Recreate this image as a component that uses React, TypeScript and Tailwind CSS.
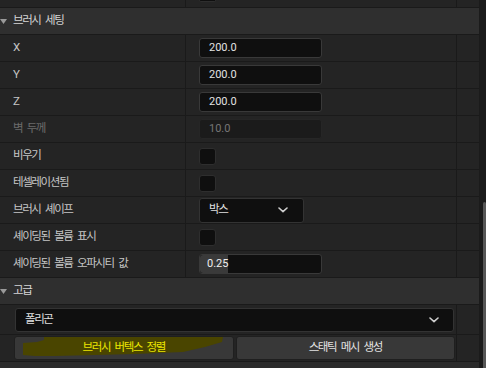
import React from "react";

const font = "font-['Roboto','Noto_Sans_CJK_KR',sans-serif]";
const ko = "text-[11.5px] tracking-[-1.4px] [word-spacing:3px]";

const Chevron = () => (
  <svg width="10" height="6" viewBox="0 0 10 6" fill="none">
    <path d="M1 1l4 3.6L9 1" stroke="#cfcfcf" strokeWidth="1.6" strokeLinecap="round" strokeLinejoin="round" />
  </svg>
);

const Row: React.FC<{ label: string; disabled?: boolean; children?: React.ReactNode }> = ({ label, disabled, children }) => (
  <div className="flex h-[27px] border-b border-[#1a1a1a] bg-[#242424]">
    <div className={`w-[185px] flex items-center pl-[13px] ${ko} ${disabled ? "text-[#6b6b6b]" : "text-[#c6c6c6]"}`}>
      {label}
    </div>
    <div className="w-px bg-[#1a1a1a]" />
    <div className="w-[270px] flex items-center pl-[13px]">{children}</div>
    <div className="w-px bg-[#1a1a1a]" />
    <div className="flex-1" />
  </div>
);

const Header: React.FC<{ label: string }> = ({ label }) => (
  <div className="flex items-center h-[27px] border-b border-[#1a1a1a] bg-[#2f2f2f]">
    <svg width="7" height="5" viewBox="0 0 7 5" className="mr-[6px]">
      <path d="M0 0h7L3.5 5z" fill="#9a9a9a" />
    </svg>
    <span className={`${ko} text-[#d6d6d6]`}>{label}</span>
  </div>
);

const NumInput: React.FC<{ value: string; disabled?: boolean }> = ({ value, disabled }) => (
  <div
    className={`w-[123px] h-[20px] rounded-[3px] border flex items-center pl-[9px] text-[11px] ${
      disabled ? "bg-[#1b1b1b] border-[#262626] text-[#767676]" : "bg-[#0f0f0f] border-[#393939] text-[#e2e2e2]"
    }`}
  >
    {value}
  </div>
);

const Check = () => <div className="w-[17px] h-[17px] rounded-[3px] bg-[#0f0f0f] border border-[#2e2e2e]" />;

export default function App() {
  return (
    <div className={`w-[486px] h-[368px] overflow-hidden flex bg-[#242424] ${font}`}>
      <div className="w-[479px] flex flex-col">
        {/* partial row above */}
        <div className="flex h-[8px] border-b border-[#1a1a1a] bg-[#242424]">
          <div className="w-[185px]" />
          <div className="w-px bg-[#1a1a1a]" />
          <div className="w-[270px] pl-[13px]">
            <div className="w-[17px] h-[2px] rounded-b-[3px] bg-[#0f0f0f] border-x border-b border-[#2e2e2e]" />
          </div>
          <div className="w-px bg-[#1a1a1a]" />
        </div>

        <Header label="브러시 세팅" />
        <Row label="X">
          <NumInput value="200.0" />
        </Row>
        <Row label="Y">
          <NumInput value="200.0" />
        </Row>
        <Row label="Z">
          <NumInput value="200.0" />
        </Row>
        <Row label="벽 두께" disabled>
          <NumInput value="10.0" disabled />
        </Row>
        <Row label="비우기">
          <Check />
        </Row>
        <Row label="테셀레이션됨">
          <Check />
        </Row>
        <Row label="브러시 셰이프">
          <div className={`w-[105px] h-[25px] rounded-[3px] bg-[#0f0f0f] border border-[#333] flex items-center justify-between pl-[9px] pr-[15px] ${ko} text-[#e0e0e0]`}>
            <span>박스</span>
            <Chevron />
          </div>
        </Row>
        <Row label="셰이딩된 볼륨 표시">
          <Check />
        </Row>
        <Row label="셰이딩된 볼륨 오파시티 값">
          <div className="relative w-[123px] h-[20px] rounded-[3px] bg-[#0f0f0f] border border-[#393939] flex items-center text-[11px] text-[#f0f0f0]">
            <div className="absolute left-0 top-0 bottom-0 w-[28px] rounded-l-[3px] bg-[#3a3a3a]" />
            <span className="relative pl-[7px]">0.25</span>
          </div>
        </Row>

        <Header label="고급" />

        <div className="flex h-[30px] border-b border-[#1a1a1a] bg-[#242424]">
          <div className="w-[456px] flex items-center pl-[15px] pr-[2px]">
            <div className={`flex-1 h-[24px] rounded-[3px] bg-[#0f0f0f] border border-[#333] flex items-center justify-between pl-[9px] pr-[14px] ${ko} text-[#e0e0e0]`}>
              <span>폴리곤</span>
              <Chevron />
            </div>
          </div>
          <div className="w-px bg-[#1a1a1a]" />
        </div>

        <div className="flex h-[27px] border-b border-[#1a1a1a] bg-[#242424]">
          <div className="w-[456px] flex items-center gap-[2px] pl-[14px] pr-[1px]">
            <div className="relative flex-1 h-[24px] rounded-[3px] bg-[#383838] border border-[#1f1f1f] flex items-center justify-center">
              <svg className="absolute left-0 top-0" width="219" height="24" viewBox="0 0 219 24">
                <path
                  d="M29 0 L208 0 L207 5 L190 10 L168 15 L120 17 L40 19 L20 19 L8 18 L8 6 L22 5 L29 3 Z"
                  fill="#4a4500"
                />
              </svg>
              <span className={`relative ${ko} text-[#ebe600]`}>브러시 버텍스 정렬</span>
            </div>
            <div className="flex-1 h-[24px] rounded-[3px] bg-[#383838] border border-[#1f1f1f] flex items-center justify-center">
              <span className={`${ko} text-[#e2e2e2]`}>스태틱 메시 생성</span>
            </div>
          </div>
          <div className="w-px bg-[#1a1a1a]" />
        </div>

        <div className="flex-1 bg-[#2b2b2b]" />
      </div>

      <div className="w-[7px] flex flex-col bg-[#1b1b1b]">
        <div className="h-[202px]" />
        <div className="flex-1 ml-auto w-[3px] rounded-t-[2px] bg-[#565656]" />
      </div>
    </div>
  );
}
